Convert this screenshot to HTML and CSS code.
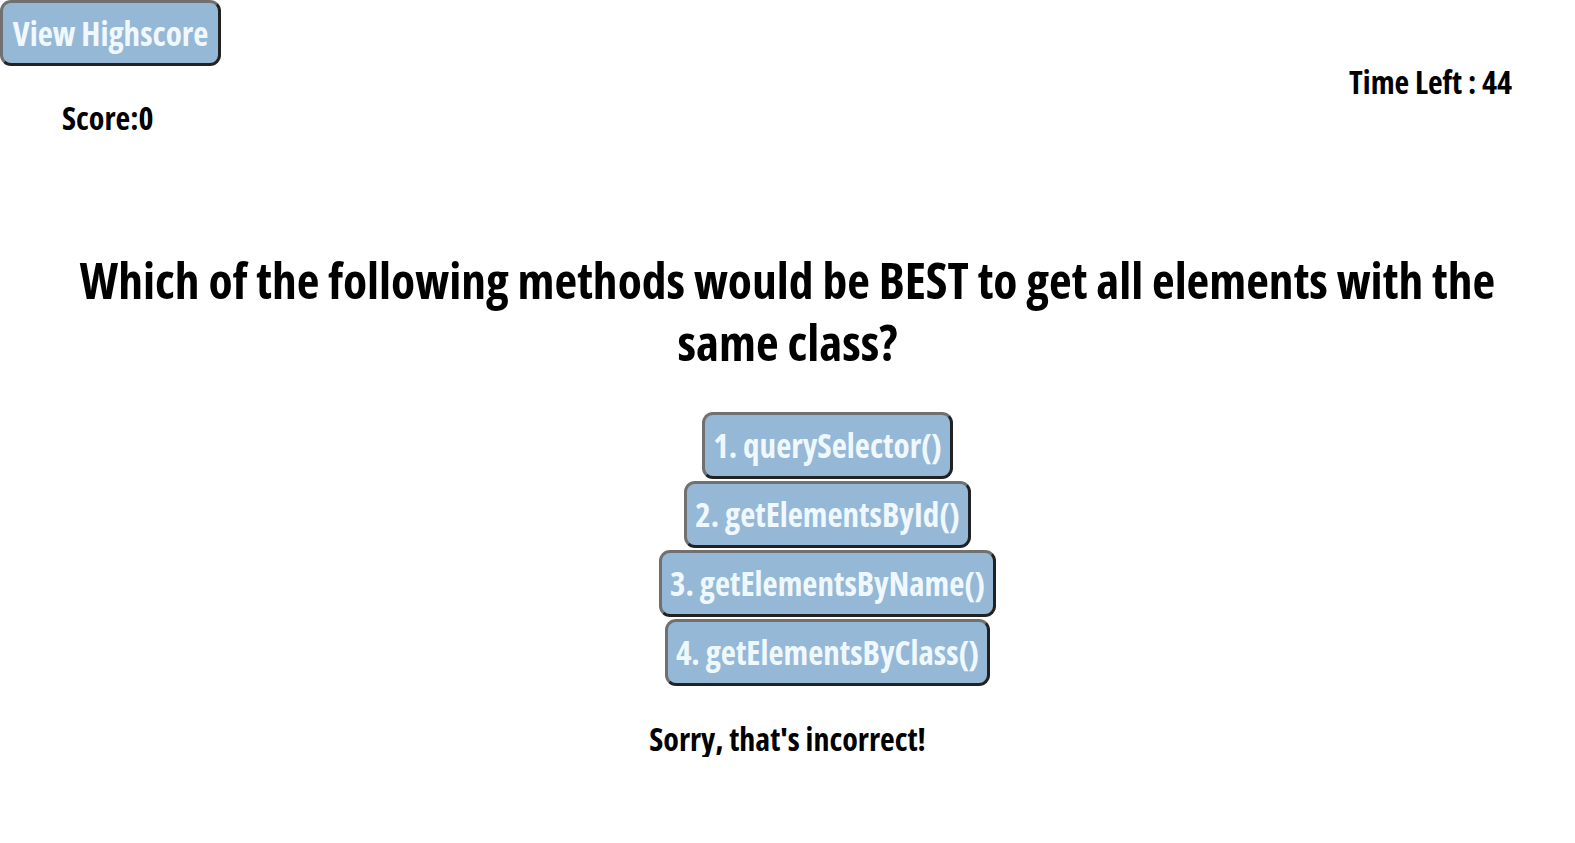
FILE: index.html
```html
<!DOCTYPE html>
<html lang="en">
<head>
<meta charset="utf-8">
<title>Code Quiz</title>
<link rel="stylesheet" href="styles.css">
</head>
<body>
<header class="top">
  <div class="left">
    <button class="btn hs-btn">View Highscore</button>
    <p class="score">Score:0</p>
  </div>
  <p class="timer">Time Left : 44</p>
</header>
<main class="quiz">
  <h1 class="question">Which of the following methods would be BEST to get all elements with the same class?</h1>
  <ul class="answers">
    <li><button class="btn answer">1. querySelector()</button></li>
    <li><button class="btn answer">2. getElementsById()</button></li>
    <li><button class="btn answer">3. getElementsByName()</button></li>
    <li><button class="btn answer">4. getElementsByClass()</button></li>
  </ul>
  <p class="feedback">Sorry, that's incorrect!</p>
</main>
</body>
</html>
```
FILE: styles.css
```css
* { box-sizing: border-box; }
body {
  margin: 0;
  font-family: "Open Sans", "DejaVu Sans Condensed", sans-serif;
  font-stretch: 75%;
  font-weight: 700;
  color: #000;
  background: #fff;
}
.top {
  display: flex;
  justify-content: space-between;
  align-items: flex-start;
}
.left {
  display: flex;
  flex-direction: column;
  align-items: flex-start;
}
.btn {
  font-family: inherit;
  font-stretch: inherit;
  font-weight: 700;
  color: #f0f8ff;
  background: #95b8d6;
  border: 3px solid;
  border-color: #707070 #222 #222 #707070;
  border-radius: 11px;
  cursor: pointer;
}
.hs-btn {
  width: 221px;
  height: 66px;
  font-size: 33px;
  padding: 0;
}
.score {
  margin: 34px 0 0 62px;
  font-size: 32px;
  line-height: 36px;
}
.timer {
  margin: 64px 63px 0 0;
  font-size: 32px;
  line-height: 36px;
}
.quiz {
  display: flex;
  flex-direction: column;
  align-items: center;
  padding: 0 60px;
}
.question {
  margin: 113px 0 0;
  font-size: 49.5px;
  line-height: 62px;
  text-align: center;
}
.answers {
  align-self: flex-start;
  box-sizing: content-box;
  width: 100%;
  list-style: none;
  margin: 39px 0 0;
  padding: 0 0 0 40px;
  display: flex;
  flex-direction: column;
  align-items: center;
  gap: 2px;
}
.answers li {
  display: flex;
}
.answer {
  height: 67px;
  padding: 0 8px;
  font-size: 33px;
}
.feedback {
  margin: 35px 0 0;
  font-size: 32px;
  line-height: 36px;
}
```
